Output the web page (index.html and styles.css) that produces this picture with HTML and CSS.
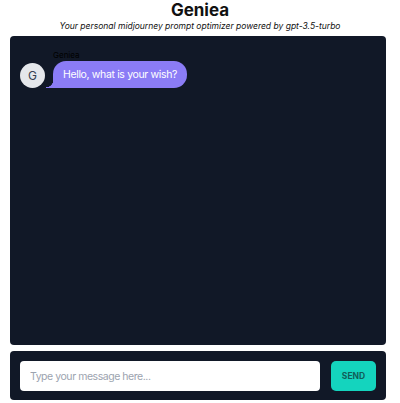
FILE: index.html
```html
<!DOCTYPE html>
<html lang="en">
<head>
    <meta charset="UTF-8">
    <meta name="viewport" content="width=device-width, initial-scale=1.0">
    <title>Geniea</title>
    <link rel="stylesheet" href="styles.css">
</head>
<body>
    <div class="container">
        <div class="title">Geniea</div>
        <div class="subtitle">Your personal midjourney prompt optimizer powered by gpt-3.5-turbo</div>
        <div class="chat">
            <div class="message">
                <div class="avatar">G</div>
                <div class="message-body">
                    <div class="sender">Geniea</div>
                    <div class="bubble">Hello, what is your wish?</div>
                </div>
            </div>
        </div>
        <div class="composer">
            <input type="text" class="input" placeholder="Type your message here...">
            <button class="send-button">SEND</button>
        </div>
    </div>
</body>
</html>
```

FILE: styles.css
```css
body {
    font-family: Inter, 'Noto Sans', sans-serif;
    background-color: #FFFFFF;
    color: #111111;
    margin: 0;
    padding: 0;
}
.container {
    width: 376px;
    margin-left: 10px;
    display: flex;
    flex-direction: column;
}
.title {
    font-size: 17px;
    font-weight: bold;
    text-align: center;
    line-height: 20px;
    margin-left: 4px;
}
.subtitle {
    font-size: 8.5px;
    font-style: italic;
    text-align: center;
    line-height: 12px;
    margin-left: 4px;
    margin-bottom: 4px;
}
.chat {
    height: 309px;
    background-color: #111827;
    border-radius: 4px;
    padding: 14px 10px;
    box-sizing: border-box;
}
.message {
    display: flex;
    align-items: flex-end;
    gap: 8px;
}
.avatar {
    width: 25px;
    height: 25px;
    border-radius: 50%;
    background-color: #E5E7EB;
    color: #374151;
    font-size: 12px;
    display: flex;
    align-items: center;
    justify-content: center;
}
.sender {
    font-size: 8px;
    line-height: 10px;
    color: #000000;
    margin-bottom: 1px;
}
.bubble {
    position: relative;
    background-color: #8B7CF6;
    color: #FFFFFF;
    font-size: 10.5px;
    letter-spacing: -0.35px;
    line-height: 27px;
    padding: 0 10px;
    border-radius: 13px 13px 13px 0;
}
.bubble::before {
    content: '';
    position: absolute;
    left: -7px;
    bottom: 0;
    width: 7px;
    height: 8px;
    background: radial-gradient(circle at 0 0, transparent 7px, #8B7CF6 7.5px);
}
.composer {
    margin-top: 6px;
    height: 49px;
    background-color: #111827;
    border-radius: 4px;
    padding: 10px;
    box-sizing: border-box;
    display: flex;
    gap: 11px;
}
.input {
    flex: 1;
    height: 30px;
    box-sizing: border-box;
    border: none;
    border-radius: 4px;
    background-color: #FFFFFF;
    padding: 0 10px;
    font-family: inherit;
    font-size: 10.5px;
    letter-spacing: -0.45px;
    color: #111111;
    outline: none;
}
.input::placeholder {
    color: #9CA3AF;
}
.send-button {
    width: 45px;
    height: 30px;
    border: none;
    border-radius: 5px;
    background-color: #14D4BE;
    color: #115E59;
    font-family: inherit;
    font-size: 8.5px;
    font-weight: bold;
    cursor: pointer;
    padding: 0;
}
```
